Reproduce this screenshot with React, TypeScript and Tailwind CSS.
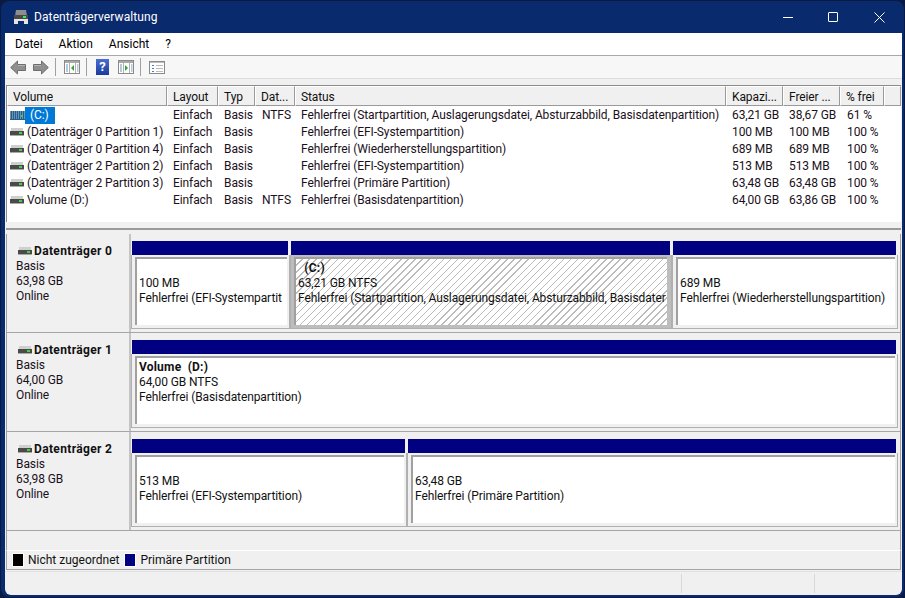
const rows = [
  { name: "(C:)", layout: "Einfach", typ: "Basis", dat: "NTFS", status: "Fehlerfrei (Startpartition, Auslagerungsdatei, Absturzabbild, Basisdatenpartition)", cap: "63,21 GB", free: "38,67 GB", pct: "61 %", selected: true },
  { name: "(Datenträger 0 Partition 1)", layout: "Einfach", typ: "Basis", dat: "", status: "Fehlerfrei (EFI-Systempartition)", cap: "100 MB", free: "100 MB", pct: "100 %" },
  { name: "(Datenträger 0 Partition 4)", layout: "Einfach", typ: "Basis", dat: "", status: "Fehlerfrei (Wiederherstellungspartition)", cap: "689 MB", free: "689 MB", pct: "100 %" },
  { name: "(Datenträger 2 Partition 2)", layout: "Einfach", typ: "Basis", dat: "", status: "Fehlerfrei (EFI-Systempartition)", cap: "513 MB", free: "513 MB", pct: "100 %" },
  { name: "(Datenträger 2 Partition 3)", layout: "Einfach", typ: "Basis", dat: "", status: "Fehlerfrei (Primäre Partition)", cap: "63,48 GB", free: "63,48 GB", pct: "100 %" },
  { name: "Volume (D:)", layout: "Einfach", typ: "Basis", dat: "NTFS", status: "Fehlerfrei (Basisdatenpartition)", cap: "64,00 GB", free: "63,86 GB", pct: "100 %" },
]

const headers = [
  { label: "Volume", cls: "w-[160px]" },
  { label: "Layout", cls: "w-[51px]" },
  { label: "Typ", cls: "w-[37px]" },
  { label: "Dat...", cls: "w-[40px]" },
  { label: "Status", cls: "w-[431px]" },
  { label: "Kapazi...", cls: "w-[57px]" },
  { label: "Freier ...", cls: "w-[57px]" },
  { label: "% frei", cls: "w-[44px]" },
  { label: "", cls: "flex-1" },
]

const disks = [
  {
    name: "Datenträger 0",
    size: "63,98 GB",
    parts: [
      { cls: "w-[159px]", lines: ["100 MB", "Fehlerfrei (EFI-Systempartit"] },
      { cls: "w-[382px]", title: "  (C:)", lines: ["63,21 GB NTFS", "Fehlerfrei (Startpartition, Auslagerungsdatei, Absturzabbild, Basisdater"], selected: true },
      { cls: "flex-1", lines: ["689 MB", "Fehlerfrei (Wiederherstellungspartition)"] },
    ],
  },
  {
    name: "Datenträger 1",
    size: "64,00 GB",
    parts: [{ cls: "flex-1", title: "Volume  (D:)", lines: ["64,00 GB NTFS", "Fehlerfrei (Basisdatenpartition)"] }],
  },
  {
    name: "Datenträger 2",
    size: "63,98 GB",
    parts: [
      { cls: "w-[276px]", lines: ["513 MB", "Fehlerfrei (EFI-Systempartition)"] },
      { cls: "flex-1", lines: ["63,48 GB", "Fehlerfrei (Primäre Partition)"] },
    ],
  },
]

function DiskIcon() {
  return (
    <svg width="14" height="9" viewBox="0 0 14 9" className="shrink-0">
      <rect x="1" y="0" width="12" height="3" fill="#cfcfcf" />
      <rect x="0" y="3" width="14" height="4" fill="#4a4a4a" />
      <rect x="9" y="4" width="3" height="2" fill="#3fd43f" />
      <rect x="0" y="7" width="14" height="1" fill="#a8a8a8" />
    </svg>
  )
}

function StripedIcon() {
  return (
    <svg width="15" height="9" viewBox="0 0 15 9" className="shrink-0">
      <rect x="0" y="0" width="15" height="9" fill="#2a5c8a" />
      <path d="M0 1h15M0 3h15M0 5h15M0 7h15" stroke="#9fd0e8" strokeWidth="1" strokeDasharray="1 1" />
      <rect x="11" y="4" width="2" height="2" fill="#39d43f" />
    </svg>
  )
}

function WindowIcon({ arrow }: { arrow: "left" | "right" }) {
  return (
    <svg width="16" height="14" viewBox="0 0 16 14" className="shrink-0">
      <rect x="0.5" y="0.5" width="15" height="13" fill="#fff" stroke="#8a8a8a" />
      <rect x="1" y="1" width="14" height="2" fill="#a9a9a9" />
      <path d="M5.500 3v10M11.500 3v10" stroke="#b0b0b0" />
      <path d="M2 5h2M2 7h2M2 9h2M2 11h2" stroke="#6f8fc0" />
      <path d="M13 5h1.500M13 7h1.500M13 9h1.500M13 11h1.500" stroke="#6f8fc0" />
      {arrow === "left" ? <path d="M10 5v6L7 8z" fill="#2fa52f" /> : <path d="M7 5v6l3-3z" fill="#2fa52f" />}
    </svg>
  )
}

function NavArrow({ flip }: { flip?: boolean }) {
  return (
    <svg width="16" height="15" viewBox="0 0 16 15" className={`shrink-0 ${flip ? "-scale-x-100" : ""}`}>
      <path d="M7.500 1 .7 7.500 7.500 14v-3.500h8v-6h-8z" fill="#8f8f8f" stroke="#6e6e6e" />
      <path d="M8 5.500h7" stroke="#b4b4b4" />
    </svg>
  )
}

function Sep() {
  return <div className="w-px h-[18px] bg-[#a0a0a0] shrink-0" />
}

export default function App() {
  return (
    <div className="w-[905px] h-[598px] overflow-hidden bg-[#0a1a40] p-px font-['Roboto',sans-serif] text-[12px] leading-[15px] text-[#111] tracking-[-0.1px]">
      <div className="flex flex-col h-full rounded-lg overflow-hidden bg-[#0a2a6e] pl-[4px] pr-[2px] pb-[2px]">
        {/* title bar */}
        <div className="h-[32px] shrink-0 flex items-center text-white pl-[8px]">
          <svg width="16" height="16" viewBox="0 0 16 16" className="shrink-0">
            <path d="M3 1h10l1 6H2z" fill="#8d8d8d" />
            <rect x="1" y="6" width="14" height="4" fill="#4a4a4a" />
            <rect x="10" y="7" width="3" height="2" fill="#49e05a" />
            <path d="M1 10h14v5h-4v-3H5v3H1z" fill="#e4e4e4" />
          </svg>
          <span className="ml-[5px] mt-px text-[12px] tracking-[0.1px]">Datenträgerverwaltung</span>
          <div className="ml-auto flex items-center h-full">
            <div className="w-[45px] flex justify-center">
              <div className="w-[10px] h-px bg-white" />
            </div>
            <div className="w-[46px] flex justify-center">
              <div className="w-[10px] h-[10px] border border-white rounded-[1px]" />
            </div>
            <div className="w-[46px] flex justify-center">
              <svg width="11" height="11" viewBox="0 0 11 11">
                <path d="M.5.5l10 10M10.500.5l-10 10" stroke="#fff" fill="none" />
              </svg>
            </div>
          </div>
        </div>

        <div className="flex flex-col flex-1 min-h-0 bg-[#f0f0f0] rounded-b-md overflow-hidden">
          {/* menu */}
          <div className="h-[23px] shrink-0 flex items-center bg-white border-b border-[#a8a8a8] pl-[10px] pt-px gap-[16px] text-black tracking-normal">
            <span>Datei</span>
            <span>Aktion</span>
            <span>Ansicht</span>
            <span>?</span>
          </div>

          {/* toolbar */}
          <div className="h-[23px] shrink-0 flex items-center pl-[5px] bg-[#f7f7f7] border-b border-[#dcdcdc]">
            <NavArrow />
            <div className="w-[7px]" />
            <NavArrow flip />
            <div className="w-[6px]" />
            <Sep />
            <div className="w-[8px]" />
            <WindowIcon arrow="left" />
            <div className="w-[6px]" />
            <Sep />
            <div className="w-[9px]" />
            <div className="w-[13px] h-[16px] bg-gradient-to-b from-[#4a6fd0] to-[#1c3a9c] text-white text-[13px] leading-[16px] font-bold text-center">?</div>
            <div className="w-[9px]" />
            <WindowIcon arrow="right" />
            <div className="w-[6px]" />
            <Sep />
            <div className="w-[8px]" />
            <svg width="16" height="13" viewBox="0 0 16 13" className="shrink-0">
              <rect x="0.500" y="0.500" width="15" height="12" fill="#fff" stroke="#8a8a8a" />
              <rect x="1" y="1" width="14" height="1" fill="#c0c0c0" />
              <path d="M3 4.500h2M3 7.500h2M3 10.500h2" stroke="#3b7fd0" />
              <path d="M7 4.500h7M7 7.500h7M7 10.500h7" stroke="#bbb" />
            </svg>
          </div>

          {/* volume list */}
          <div className="ml-px mr-px mt-[6px] h-[137px] shrink-0 bg-white border-t border-l border-[#8c8c8c]">
            <div className="flex h-[20px] bg-[#f0f0f0]">
              {headers.map((h, i) => (
                <div key={i} className={`${h.cls} border border-white border-r-[#9a9a9a] border-b-[#9a9a9a] pl-[5px] leading-[20px] whitespace-nowrap overflow-hidden`}>
                  {h.label}
                </div>
              ))}
            </div>
            <div className="pt-px">
              {rows.map((r) => (
                <div key={r.name} className="flex h-[17px] items-center whitespace-nowrap text-[#1a1020]">
                  <div className="w-[160px] pl-[3px] flex items-center">
                    {r.selected ? <StripedIcon /> : <DiskIcon />}
                    {r.selected ? (
                      <span className="px-[5px] w-[30px] h-[17px] leading-[17px] bg-[#0078d7] text-white">{r.name}</span>
                    ) : (
                      <span className="ml-[3px]">{r.name}</span>
                    )}
                  </div>
                  <div className="w-[51px] pl-[6px]">{r.layout}</div>
                  <div className="w-[37px] pl-[6px]">{r.typ}</div>
                  <div className="w-[40px] pl-[7px]">{r.dat}</div>
                  <div className="w-[431px] pl-[6px]">{r.status}</div>
                  <div className="w-[57px] pl-[6px]">{r.cap}</div>
                  <div className="w-[57px] pl-[6px]">{r.free}</div>
                  <div className="pl-[7px]">{r.pct}</div>
                </div>
              ))}
            </div>
          </div>

          {/* splitter */}
          <div className="h-[6px] shrink-0 mt-[6px] ml-px mr-px border-t-2 border-[#9a9a9a]" />

          {/* graphical view */}
          <div className="ml-px mr-px flex flex-col flex-1 min-h-0 border-l border-r border-[#a0a0a0]">
            {disks.map((d) => (
              <div key={d.name} className="flex h-[99px] shrink-0 border-b border-b-[#a6a6a6]">
                <div className="w-[124px] shrink-0 border-r-2 border-[#c4c4c4] pl-[9px] pt-[10px] text-[#1a1020]">
                  <div className="flex items-center gap-[2px] pl-[2px] font-bold tracking-[0.35px]">
                    <DiskIcon />
                    <span className="text-[#111]">{d.name}</span>
                  </div>
                  <div>Basis</div>
                  <div>{d.size}</div>
                  <div>Online</div>
                </div>
                <div className="flex flex-1 pr-[2px] pt-[7px] pb-[3px]">
                  {d.parts.map((p, i) => (
                    <div key={i} className={`${p.cls} flex flex-col`}>
                      <div className="h-[14px] shrink-0 ml-px mr-[2px] bg-[#000080]" />
                      <div className={`flex-1 min-h-0 border-l border-b border-r border-[#b0b0b0] pt-[2px] pb-[3px] pl-[3px] ${p.selected ? "bg-[#bdbdbd] pr-[4px]" : "bg-[#f0f0f0] pr-[2px]"}`}>
                        <div
                          className={`h-full border-t-2 border-l-2 border-[#a0a0a0] overflow-hidden whitespace-pre pl-[2px] pt-[2px] ${
                            p.selected
                              ? "bg-[repeating-linear-gradient(135deg,#fff_0,#fff_4px,#bbbbbb_4px,#bbbbbb_5px)]"
                              : "bg-white"
                          }`}
                        >
                          {p.title ? <div className="font-bold text-[#111] tracking-[0.2px]">{p.title}</div> : <div className="h-[15px]" />}
                          {p.lines.map((l) => (
                            <div key={l}>{l}</div>
                          ))}
                        </div>
                      </div>
                    </div>
                  ))}
                </div>
              </div>
            ))}
            <div className="flex-1" />
          </div>

          {/* legend */}
          <div className="ml-px mr-px h-[20px] shrink-0 flex items-center border-t border-t-white border-b border-b-[#a6a6a6] border-x border-x-[#a6a6a6] pl-[5px] tracking-normal">
            <div className="w-[12px] h-[14px] bg-black border border-white shrink-0" />
            <span className="ml-[4px] mt-px">Nicht zugeordnet</span>
            <div className="ml-[5px] w-[12px] h-[14px] bg-[#000080] border border-white shrink-0" />
            <span className="ml-[4px] mt-px">Primäre Partition</span>
          </div>

          {/* status bar */}
          <div className="h-[24px] mt-px shrink-0 flex border-t border-[#e0e0e0] justify-end">
            <div className="w-[133px] border-l border-[#d8d8d8] my-[2px]" />
            <div className="w-[88px] border-l border-[#d8d8d8] my-[2px]" />
          </div>
        </div>
      </div>
    </div>
  )
}
